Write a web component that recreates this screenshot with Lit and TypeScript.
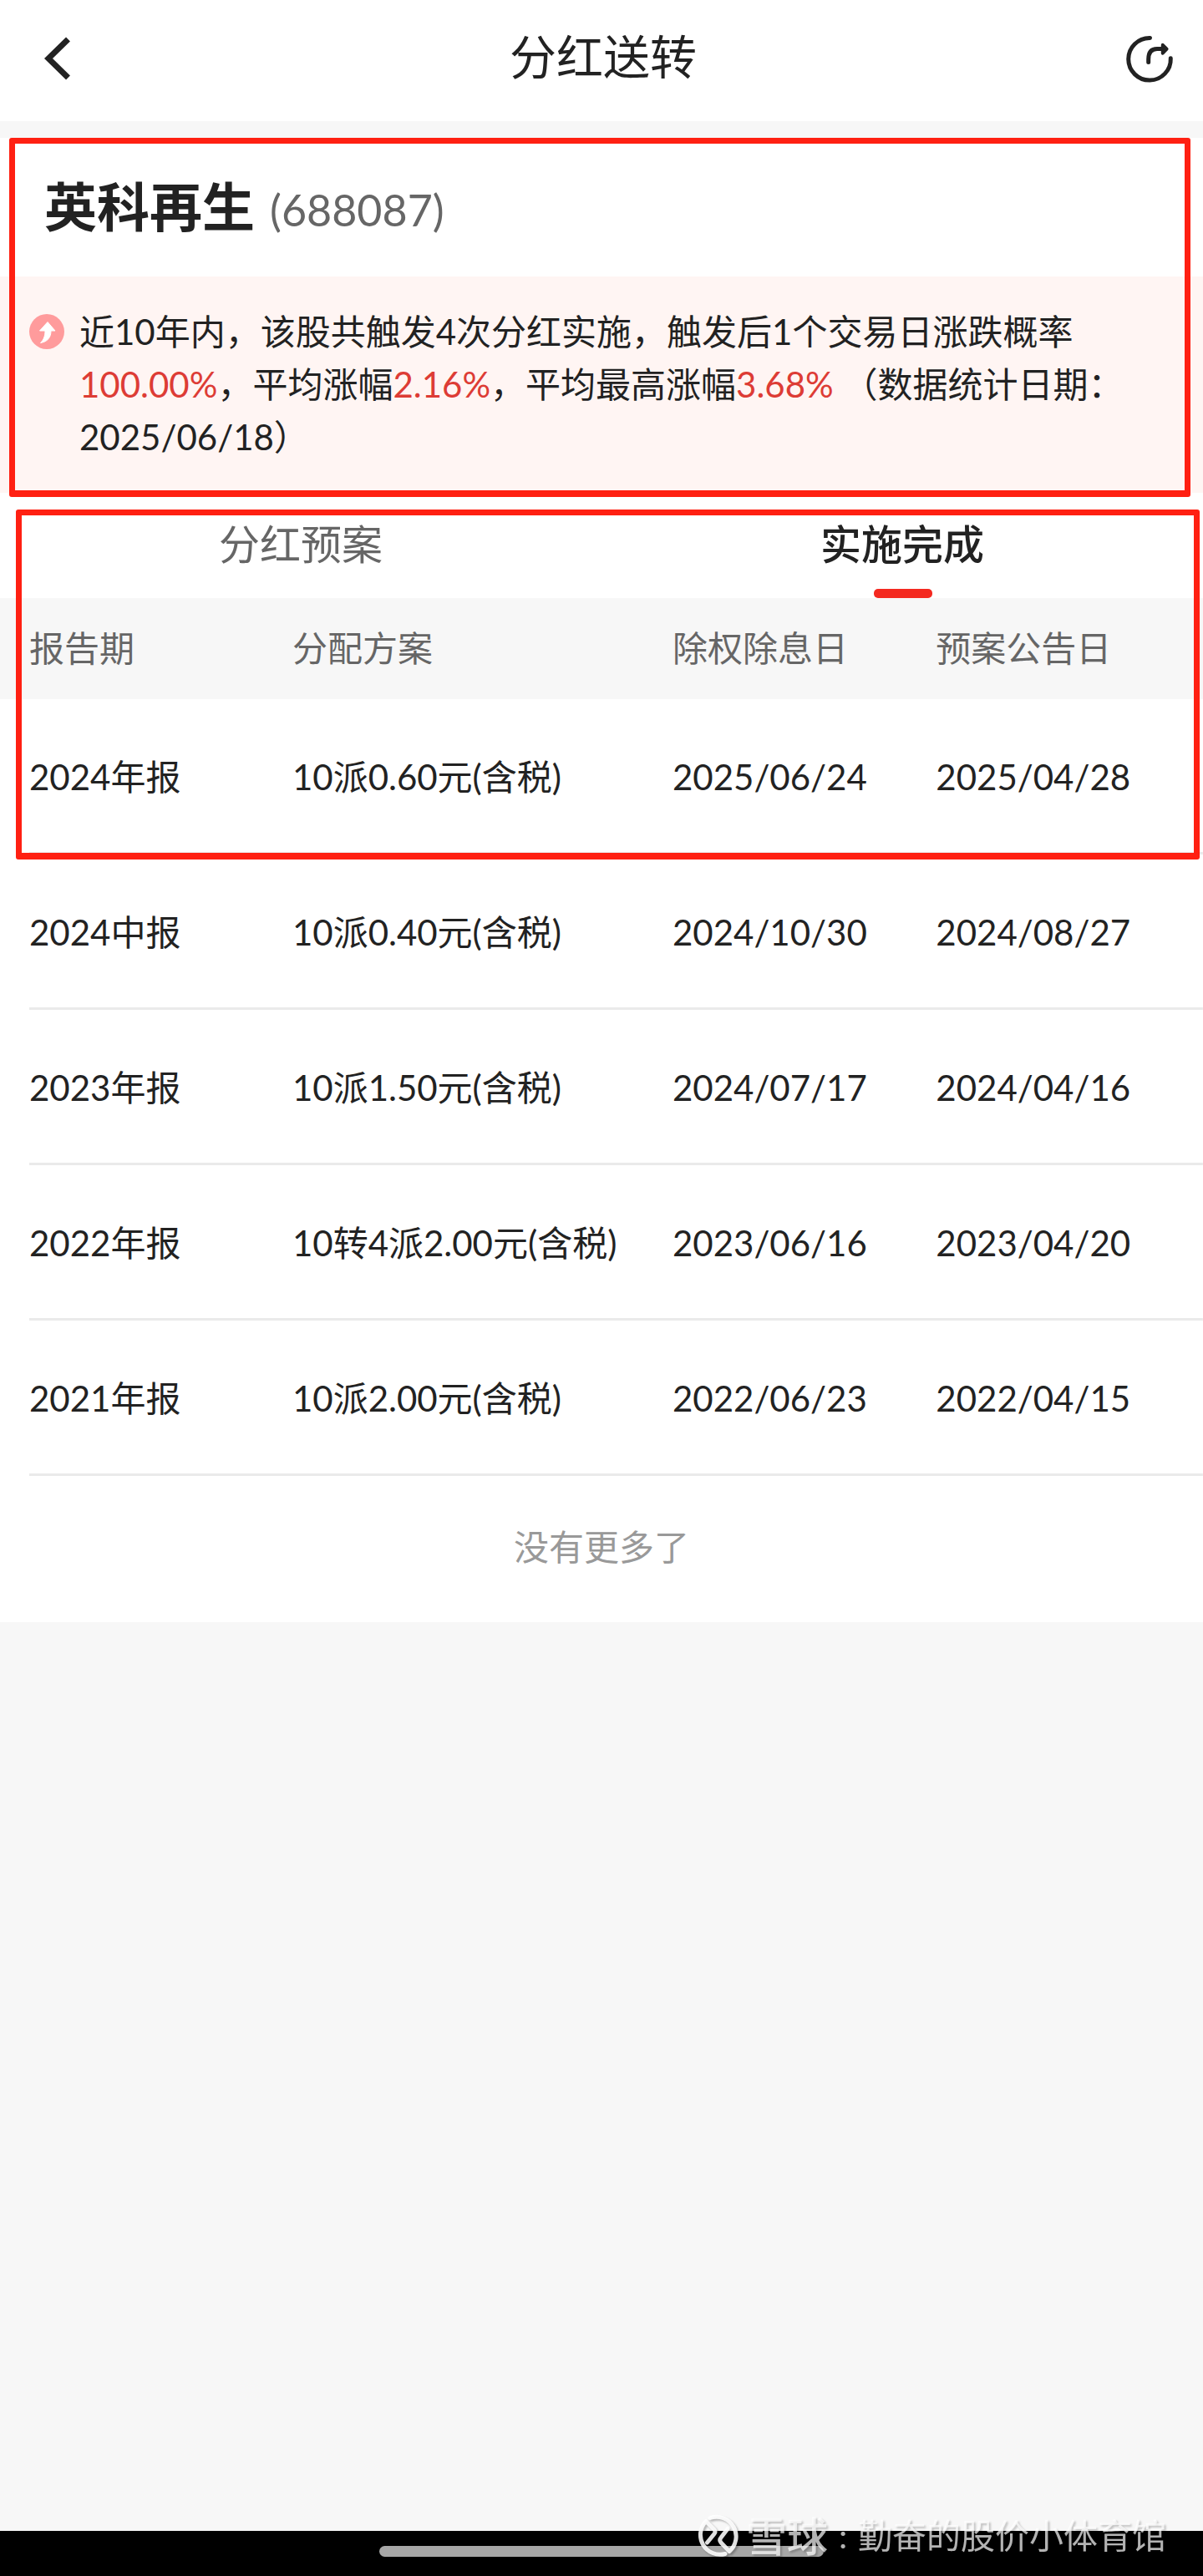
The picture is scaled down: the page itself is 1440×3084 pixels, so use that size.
import { LitElement, html, css, svg } from "lit";
import { customElement, state } from "lit/decorators.js";

interface Dividend {
  period: string;
  plan: string;
  exDate: string;
  noticeDate: string;
}

const DIVIDENDS: Dividend[] = [
  { period: "2024年报", plan: "10派0.60元(含税)", exDate: "2025/06/24", noticeDate: "2025/04/28" },
  { period: "2024中报", plan: "10派0.40元(含税)", exDate: "2024/10/30", noticeDate: "2024/08/27" },
  { period: "2023年报", plan: "10派1.50元(含税)", exDate: "2024/07/17", noticeDate: "2024/04/16" },
  { period: "2022年报", plan: "10转4派2.00元(含税)", exDate: "2023/06/16", noticeDate: "2023/04/20" },
  { period: "2021年报", plan: "10派2.00元(含税)", exDate: "2022/06/23", noticeDate: "2022/04/15" },
];

const TABS = ["分红预案", "实施完成"];

const backIcon = svg`
  <svg class="icon" viewBox="0 0 64 64" aria-hidden="true">
    <path d="M45.500 9 L22 32 L45.500 55" fill="none" stroke="#222" stroke-width="7" stroke-linejoin="miter"/>
  </svg>`;

const shareIcon = svg`
  <svg class="icon" viewBox="0 0 64 64" aria-hidden="true" fill="none" stroke="#222" stroke-linecap="round" stroke-linejoin="round">
    <path d="M32.500 7.500 A25.300 25.300 0 1 0 57.300 31.800" stroke-width="5"/>
    <path d="M30.700 36.500 V33 Q30.700 20.500 41 20.500 H50" stroke-width="5"/>
    <path d="M47.800 15.800 L52.600 20.700 L47.800 25.700 Z" fill="#222" stroke-width="4"/>
  </svg>`;

const riseIcon = svg`
  <svg class="rise" viewBox="0 0 42 42" aria-hidden="true">
    <circle cx="21" cy="21" r="21" fill="#ff9b9c"/>
    <path d="M22 9.500 L31 20 H26 C26 28 22 33 13.500 34.500 C17.500 30.500 19 26 19 20 H12.500 Z" fill="#fff" stroke="#fff" stroke-linejoin="round"/>
  </svg>`;

const snowballLogo = svg`
  <svg class="brand-logo" viewBox="0 0 52 52" aria-hidden="true" fill="none" stroke="currentColor" stroke-width="5" stroke-linecap="round" stroke-linejoin="round">
    <path d="M17 4.500 A23.500 23.500 0 0 1 40 44.500 L30 34 Q27.500 31 30 28 L38 17.500"/>
    <path d="M35 47.500 A23.500 23.500 0 0 1 12 8.500 L22 18.500 Q24 21 22 23.500 L13.500 34"/>
  </svg>`;

@customElement("app-root")
export class AppRoot extends LitElement {
  @state() private activeTab = 1;

  static styles = css`
    :host {
      display: block;
      color: #222;
      font-family: Lato, "Noto Sans CJK SC", sans-serif;
      font-size: 42px;
      line-height: 63px;
    }
    * {
      box-sizing: border-box;
    }
    .page {
      position: relative;
      display: flex;
      flex-direction: column;
      min-height: 100vh;
      background: #f7f7f7;
    }
    button {
      margin: 0;
      padding: 0;
      border: 0;
      background: none;
      color: inherit;
      font: inherit;
      cursor: pointer;
    }
    .topbar {
      display: grid;
      grid-template-columns: 64px 1fr 64px;
      align-items: start;
      padding: 36px 32px 37px 36px;
      margin-bottom: 20px;
      background: #fff;
    }
    .title {
      margin: 0;
      font-size: 56px;
      font-weight: 400;
      line-height: 64px;
      text-align: center;
    }
    .icon-button {
      display: flex;
      height: 72px;
      align-items: center;
    }
    .icon {
      display: block;
      width: 64px;
      height: 64px;
      margin-bottom: 4px;
    }
    .stock {
      position: relative;
      z-index: 1;
      background: #fff;
    }
    .stock-head {
      display: flex;
      align-items: baseline;
      gap: 18px;
      height: 166px;
      padding: 36px 53px;
    }
    .stock-name {
      margin: 0;
      font-size: 63px;
      font-weight: 700;
      line-height: 92px;
    }
    .stock-code {
      color: #666;
      font-size: 52px;
    }
    .notice {
      display: grid;
      grid-template-columns: 42px 1fr;
      gap: 18px;
      padding: 35px 36px 35px 35px;
      background: #fff5f3;
    }
    .notice-text {
      margin: 0;
    }
    .rise {
      width: 42px;
      height: 42px;
      margin-top: 10px;
    }
    .up {
      color: #dd3c35;
    }
    .mark {
      position: absolute;
      border: 7px solid #ff2012;
      border-bottom-width: 8px;
      border-radius: 3px;
      pointer-events: none;
    }
    .mark-stock {
      inset: 0 15px -5px 11px;
    }
    .mark-latest {
      top: 20px;
      right: 4px;
      left: 19px;
      height: 419px;
    }
    .records {
      position: relative;
      background: #fff;
    }
    .tabs {
      display: grid;
      grid-template-columns: 1fr 1fr;
    }
    .tab {
      position: relative;
      height: 126px;
      padding-bottom: 4px;
      color: #666;
      font-size: 49px;
    }
    .tab-active {
      color: #222;
      font-weight: 500;
    }
    .tab-active::after {
      position: absolute;
      bottom: 0;
      left: calc(50% - 34px);
      width: 70px;
      height: 11px;
      border-radius: 5px;
      background: #f42920;
      content: "";
    }
    .table {
      width: 100%;
      border-spacing: 0;
      table-layout: fixed;
    }
    .table th,
    .table td {
      padding: 0;
      font-weight: 400;
      text-align: left;
      white-space: nowrap;
    }
    .table th {
      height: 121px;
      background: #f7f7f7;
      color: #666;
    }
    .table td {
      height: 186px;
      background: linear-gradient(#eaeaea, #eaeaea) bottom / 100% 3px no-repeat;
    }
    .table th:first-child,
    .table td:first-child {
      padding-left: 35px;
    }
    .table td:first-child {
      background-position: 35px 100%;
    }
    .col-period {
      width: 24.300%;
    }
    .col-plan {
      width: 31.600%;
    }
    .col-date {
      width: 21.900%;
    }
    .end {
      margin: 0;
      padding: 54px 0 58px;
      color: #999;
      text-align: center;
    }
    .system-bar {
      display: flex;
      justify-content: center;
      height: 54px;
      margin-top: auto;
      padding-top: 18px;
      background: #000;
    }
    .home-pill {
      width: 37%;
      height: 13px;
      border-radius: 7px;
      background: #a6a6a6;
    }
    .watermark {
      position: absolute;
      right: 44px;
      bottom: 16px;
      display: flex;
      align-items: center;
      color: rgba(255, 255, 255, 0.7);
      font-size: 41px;
      line-height: 64px;
      filter: drop-shadow(2px 2px 1px rgba(0, 0, 0, 0.3));
    }
    .brand-logo {
      width: 52px;
      height: 52px;
      margin-right: 8px;
      color: rgba(255, 255, 255, 0.88);
    }
    .brand {
      font-size: 49px;
      font-weight: 500;
    }
    .colon {
      width: 36px;
      text-align: center;
    }
  `;

  render() {
    return html`
      <div class="page" lang="zh-CN">
        <header class="topbar">
          <button class="icon-button" type="button" aria-label="返回">${backIcon}</button>
          <h1 class="title">分红送转</h1>
          <button class="icon-button" type="button" aria-label="分享">${shareIcon}</button>
        </header>

        <section class="stock">
          <div class="stock-head">
            <h2 class="stock-name">英科再生</h2>
            <span class="stock-code">(688087)</span>
          </div>
          <div class="notice">
            ${riseIcon}
            <p class="notice-text">近10年内，该股共触发4次分红实施，触发后1个交易日涨跌概率<span class="up">100.00%</span>，平均涨幅<span class="up">2.16%</span>，平均最高涨幅<span class="up">3.68%</span> （数据统计日期：2025/06/18）</p>
          </div>
          <div class="mark mark-stock"></div>
        </section>

        <section class="records">
          <div class="tabs" role="tablist">
            ${TABS.map(
              (label, i) => html`<button
                type="button"
                role="tab"
                class=${i === this.activeTab ? "tab tab-active" : "tab"}
                aria-selected=${i === this.activeTab ? "true" : "false"}
                @click=${() => (this.activeTab = i)}
              >${label}</button>`
            )}
          </div>
          <table class="table">
            <thead>
              <tr>
                <th class="col-period" scope="col">报告期</th>
                <th class="col-plan" scope="col">分配方案</th>
                <th class="col-date" scope="col">除权除息日</th>
                <th scope="col">预案公告日</th>
              </tr>
            </thead>
            <tbody>
              ${DIVIDENDS.map(
                (d) => html`<tr>
                  <td>${d.period}</td>
                  <td>${d.plan}</td>
                  <td>${d.exDate}</td>
                  <td>${d.noticeDate}</td>
                </tr>`
              )}
            </tbody>
          </table>
          <p class="end">没有更多了</p>
          <div class="mark mark-latest"></div>
        </section>

        <footer class="system-bar"><div class="home-pill"></div></footer>
        <div class="watermark">
          ${snowballLogo}<span class="brand">雪球</span><span class="colon">:</span><span>勤奋的股价小体育馆</span>
        </div>
      </div>
    `;
  }
}
